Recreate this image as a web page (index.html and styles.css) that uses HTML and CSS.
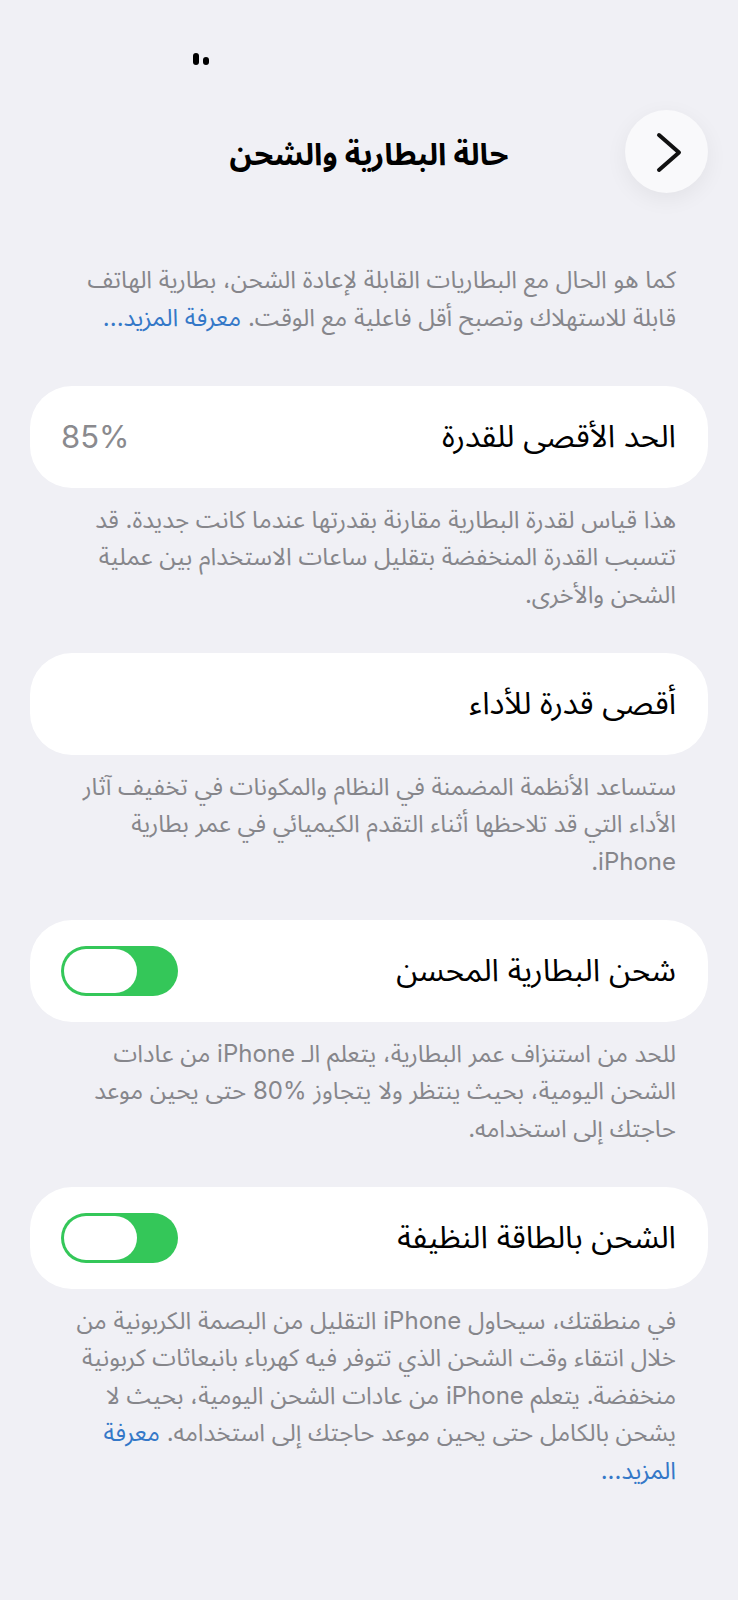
FILE: index.html
```html
<!DOCTYPE html>
<html lang="ar" dir="rtl">
<head>
<meta charset="utf-8">
<title>حالة البطارية والشحن</title>
<link rel="stylesheet" href="styles.css">
</head>
<body>
<div class="page">
  <div class="status">
    <span class="dot dot-a"></span>
    <span class="dot dot-b"></span>
  </div>

  <header class="nav">
    <button class="back" aria-label="رجوع">
      <svg viewBox="0 0 83 83" width="83" height="83">
        <path d="M34 25 L54 42.5 L34 60" fill="none" stroke="#111" stroke-width="4" stroke-linecap="round" stroke-linejoin="round"/>
      </svg>
    </button>
    <h1 class="title">حالة البطارية والشحن</h1>
    <span class="nav-spacer"></span>
  </header>

  <p class="note note-first">كما هو الحال مع البطاريات القابلة لإعادة الشحن، بطارية الهاتف<br>قابلة للاستهلاك وتصبح أقل فاعلية مع الوقت. <a class="link" href="#">معرفة المزيد...</a></p>

  <section class="card">
    <span class="label">الحد الأقصى للقدرة</span>
    <span class="value">85%</span>
  </section>
  <p class="note">هذا قياس لقدرة البطارية مقارنة بقدرتها عندما كانت جديدة. قد<br>تتسبب القدرة المنخفضة بتقليل ساعات الاستخدام بين عملية<br>الشحن والأخرى.</p>

  <section class="card">
    <span class="label">أقصى قدرة للأداء</span>
  </section>
  <p class="note">ستساعد الأنظمة المضمنة في النظام والمكونات في تخفيف آثار<br>الأداء التي قد تلاحظها أثناء التقدم الكيميائي في عمر بطارية<br>iPhone.</p>

  <section class="card">
    <span class="label">شحن البطارية المحسن</span>
    <span class="toggle on"><span class="knob"></span></span>
  </section>
  <p class="note">للحد من استنزاف عمر البطارية، يتعلم الـ iPhone من عادات<br>الشحن اليومية، بحيث ينتظر ولا يتجاوز %80 حتى يحين موعد<br>حاجتك إلى استخدامه.</p>

  <section class="card">
    <span class="label">الشحن بالطاقة النظيفة</span>
    <span class="toggle on"><span class="knob"></span></span>
  </section>
  <p class="note">في منطقتك، سيحاول iPhone التقليل من البصمة الكربونية من<br>خلال انتقاء وقت الشحن الذي تتوفر فيه كهرباء بانبعاثات كربونية<br>منخفضة. يتعلم iPhone من عادات الشحن اليومية، بحيث لا<br>يشحن بالكامل حتى يحين موعد حاجتك إلى استخدامه. <a class="link" href="#">معرفة<br>المزيد...</a></p>
</div>
</body>
</html>
```

FILE: styles.css
```css
* {
  box-sizing: border-box;
}

html, body {
  margin: 0;
  padding: 0;
}

body {
  background: #f0f0f5;
  font-family: Inter, "Noto Sans Arabic", "DejaVu Sans", sans-serif;
  color: #000;
}

.page {
  width: 738px;
  min-height: 1600px;
  padding-bottom: 40px;
}

.status {
  direction: ltr;
  display: flex;
  align-items: flex-end;
  gap: 4px;
  height: 65px;
  padding-left: 193px;
}

.dot {
  display: block;
  background: #000;
  border-radius: 3px;
}

.dot-a {
  width: 6px;
  height: 12px;
}

.dot-b {
  width: 6px;
  height: 8px;
}

.nav {
  display: grid;
  grid-template-columns: 83px 1fr 83px;
  align-items: center;
  margin-top: 45px;
  padding: 0 30px 0 30px;
  height: 83px;
}

.back {
  width: 83px;
  height: 83px;
  border: none;
  padding: 0;
  border-radius: 50%;
  background: #f9f9fb;
  box-shadow: 0 6px 22px rgba(0, 0, 0, 0.06);
  display: flex;
  align-items: center;
  justify-content: center;
}

.back svg {
  display: block;
}

.title {
  margin: 0;
  text-align: center;
  font-size: 30.5px;
  font-weight: 700;
  line-height: 1;
  padding-top: 6px;
}

.note {
  margin: 13px 62px 40px 40px;
  font-size: 24px;
  line-height: 37.5px;
  color: #86868b;
  white-space: nowrap;
}

.note-first {
  margin-top: 68px;
  margin-bottom: 50px;
}

.link {
  color: #3478c8;
  text-decoration: none;
}

.card {
  display: flex;
  align-items: center;
  justify-content: space-between;
  margin: 0 30px 0 30px;
  height: 101.5px;
  padding: 0 32px 0 31px;
  background: #fff;
  border-radius: 42px;
}

.label {
  font-size: 31.2px;
  line-height: 1;
}

.value {
  font-size: 31px;
  color: #8a8a8e;
  direction: ltr;
}

.toggle {
  direction: ltr;
  display: flex;
  width: 117px;
  height: 50px;
  padding: 3px;
  border-radius: 25px;
  background: #34c759;
}

.knob {
  display: block;
  width: 73px;
  height: 44px;
  border-radius: 22px;
  background: #fff;
}
```
